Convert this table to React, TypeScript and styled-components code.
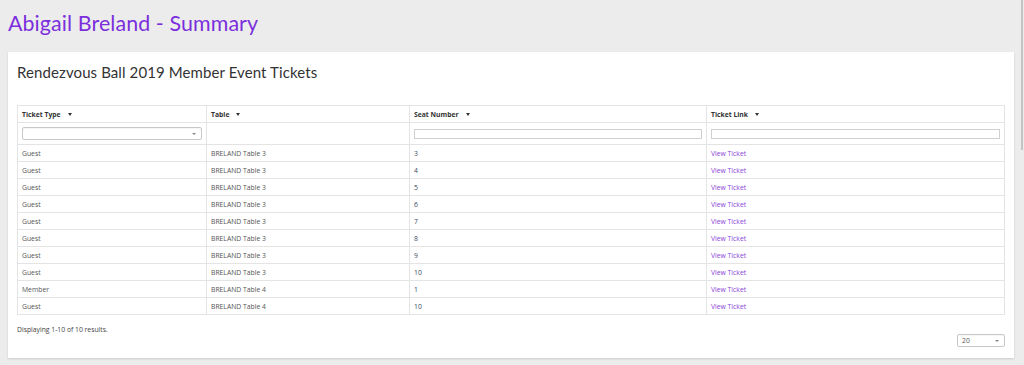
import React from "react";
import styled, { createGlobalStyle } from "styled-components";

const Global = createGlobalStyle`
  html, body { margin: 0; padding: 0; }
  body {
    background: #ececec;
    font-family: "Open Sans", "Liberation Sans", sans-serif;
    color: #555;
    overflow: hidden;
  }
`;

const Page = styled.div`
  width: 1024px;
  height: 365px;
  box-sizing: border-box;
  padding: 0 10px 0 8px;
`;

const Heading = styled.h1`
  margin: 0;
  padding-top: 10px;
  height: 52px;
  box-sizing: border-box;
  font-family: Lato, "Open Sans", sans-serif;
  font-weight: 400;
  font-size: 21.4px;
  line-height: 26px;
  color: #7b2fdc;
  letter-spacing: 0.1px;
`;

const Card = styled.section`
  background: #fff;
  box-shadow: 0 1px 2px rgba(0, 0, 0, 0.14);
  padding: 10px 9px 10px 9px;
`;

const CardTitle = styled.h2`
  margin: 0;
  height: 43px;
  font-family: Lato, "Open Sans", sans-serif;
  font-weight: 400;
  font-size: 15px;
  line-height: 20px;
  color: #333;
  letter-spacing: 0.1px;
`;

const Table = styled.table`
  width: 100%;
  table-layout: fixed;
  border-collapse: collapse;
  border: 1px solid #e4e4e4;
  font-size: 6.8px;
`;

const Th = styled.th`
  text-align: left;
  font-weight: 700;
  color: #333;
  height: 16px;
  padding: 0 4px;
  border: 1px solid #e4e4e4;
  white-space: nowrap;
`;

const Caret = styled.span`
  display: inline-block;
  margin-left: 7px;
  width: 0;
  height: 0;
  border-left: 2.5px solid transparent;
  border-right: 2.5px solid transparent;
  border-top: 3.5px solid #333;
  vertical-align: 1px;
`;

const FilterCell = styled.td`
  height: 21px;
  padding: 0 4px;
  border: 1px solid #e4e4e4;
`;

const SelectBox = styled.div<{ $w?: string }>`
  position: relative;
  box-sizing: border-box;
  width: ${(p) => p.$w ?? "100%"};
  height: 13px;
  border: 1px solid #c8c8c8;
  border-radius: 2px;
  background: #fff;
  font-size: 6.8px;
  line-height: 11px;
  padding-left: 4px;
  color: #555;
  box-shadow: inset 0 1px 1px rgba(0,0,0,0.04);
`;

const SmallCaret = styled.span`
  position: absolute;
  right: 5px;
  top: 5px;
  width: 0;
  height: 0;
  border-left: 2px solid transparent;
  border-right: 2px solid transparent;
  border-top: 2.5px solid #888;
`;

const TextInput = styled.div`
  box-sizing: border-box;
  width: 100%;
  height: 10px;
  border: 1px solid #d0d0d0;
  background: #fff;
  margin-top: 1px;
`;

const Td = styled.td<{ $tone?: "link" | "num" }>`
  height: 16px;
  padding: 0 4px;
  border: 1px solid #e4e4e4;
  color: ${(p) => (p.$tone === "link" ? "#8a3fd8" : p.$tone === "num" ? "#3a4a5e" : "#555")};
  white-space: nowrap;
`;

const Footer = styled.div`
  display: flex;
  justify-content: space-between;
  align-items: flex-start;
  padding-top: 10px;
  height: 33px;
  box-sizing: border-box;
`;

const Summary = styled.div`
  font-size: 6.8px;
  color: #444;
`;

const PageSize = styled.div`
  padding-top: 9px;
`;

const Scrollbar = styled.div`
  position: fixed;
  top: 0;
  right: 1px;
  width: 2px;
  height: 150px;
  background: #c4c4c4;
`;

const rows = [
  ["Guest", "BRELAND Table 3", "3"],
  ["Guest", "BRELAND Table 3", "4"],
  ["Guest", "BRELAND Table 3", "5"],
  ["Guest", "BRELAND Table 3", "6"],
  ["Guest", "BRELAND Table 3", "7"],
  ["Guest", "BRELAND Table 3", "8"],
  ["Guest", "BRELAND Table 3", "9"],
  ["Guest", "BRELAND Table 3", "10"],
  ["Member", "BRELAND Table 4", "1"],
  ["Guest", "BRELAND Table 4", "10"],
];

export default function App() {
  return (
    <Page>
      <Global />
      <Heading>Abigail Breland - Summary</Heading>
      <Card>
        <CardTitle>Rendezvous Ball 2019 Member Event Tickets</CardTitle>
        <Table>
          <colgroup>
            <col style={{ width: 189 }} />
            <col style={{ width: 203 }} />
            <col style={{ width: 297 }} />
            <col />
          </colgroup>
          <thead>
            <tr>
              <Th>Ticket Type<Caret /></Th>
              <Th>Table<Caret /></Th>
              <Th>Seat Number<Caret /></Th>
              <Th>Ticket Link<Caret /></Th>
            </tr>
            <tr>
              <FilterCell>
                <SelectBox>
                  <SmallCaret />
                </SelectBox>
              </FilterCell>
              <FilterCell />
              <FilterCell>
                <TextInput />
              </FilterCell>
              <FilterCell>
                <TextInput />
              </FilterCell>
            </tr>
          </thead>
          <tbody>
            {rows.map((r, i) => (
              <tr key={i}>
                <Td>{r[0]}</Td>
                <Td>{r[1]}</Td>
                <Td $tone="num">{r[2]}</Td>
                <Td $tone="link">View Ticket</Td>
              </tr>
            ))}
          </tbody>
        </Table>
        <Footer>
          <Summary>Displaying 1-10 of 10 results.</Summary>
          <PageSize>
            <SelectBox $w="48px">
              20
              <SmallCaret />
            </SelectBox>
          </PageSize>
        </Footer>
      </Card>
      <Scrollbar />
    </Page>
  );
}
